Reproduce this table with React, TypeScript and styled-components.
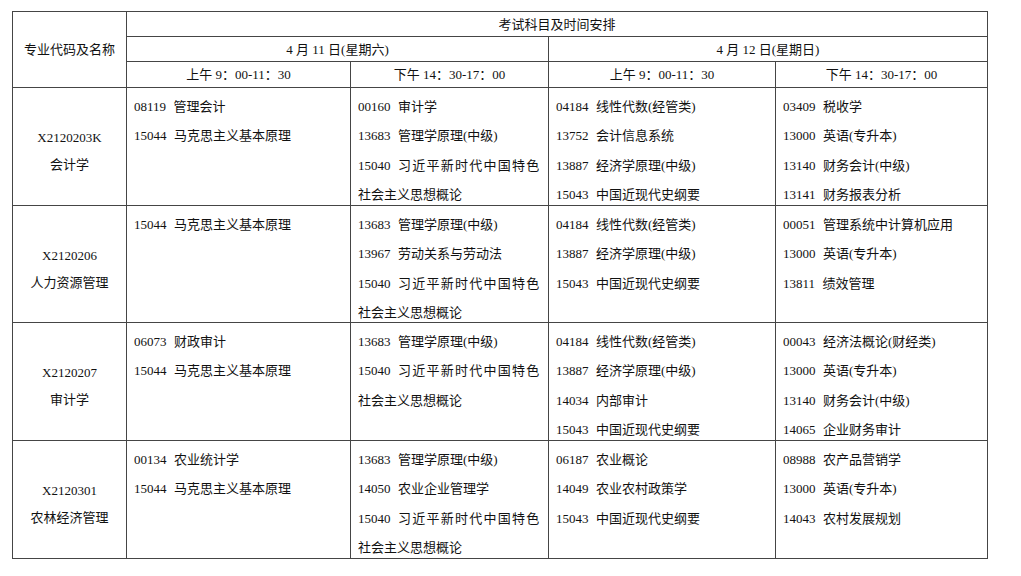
import React from "react";
import styled, { createGlobalStyle } from "styled-components";

const GlobalStyle = createGlobalStyle`
  html, body { margin: 0; padding: 0; background: #ffffff; }
  body {
    font-family: "Liberation Serif", "Noto Sans CJK SC", serif;
    color: #111111;
  }
`;

const Page = styled.div`
  padding: 11px 0 0 12px;
  width: 1021px;
  height: 576px;
  box-sizing: border-box;
`;

const Grid = styled.div`
  display: grid;
  width: max-content;
  grid-template-columns: 113px 223px 197px 226px 211px;
  grid-template-rows: 24px 24px 25px 117px 116px 117px 117px;
  gap: 1px;
  padding: 1px;
  background: #454545;
`;

const Cell = styled.div<{ $col?: string; $row?: string }>`
  background: #ffffff;
  grid-column: ${(p) => p.$col ?? "auto"};
  grid-row: ${(p) => p.$row ?? "auto"};
  font-size: 13px;
  overflow: visible;
  min-width: 0;
`;

const HeadCell = styled(Cell)`
  display: flex;
  align-items: center;
  justify-content: center;
  white-space: pre;
  line-height: 1;
`;

const MajorCell = styled(Cell)`
  display: flex;
  flex-direction: column;
  align-items: center;
  justify-content: center;
  padding-top: 9px;
  box-sizing: border-box;
  line-height: 27px;
`;

const ListCell = styled(Cell)`
  padding: 4px 8px 0 7px;
  box-sizing: border-box;
  position: relative;
  z-index: 1;
`;

const Line = styled.div`
  height: 29.3px;
  line-height: 29.3px;
  white-space: nowrap;
`;

const Code = styled.span`
  margin-right: 7.5px;
`;

const Name = styled.span<{ $spread?: boolean }>`
  letter-spacing: ${(p) => (p.$spread ? "1.25px" : "0")};
`;

type Course = { code?: string; name: string; spread?: boolean };

const split = (s: string): Course[] =>
  s.split("|").map((it) => {
    if (it.startsWith("~")) return { name: it.slice(1) };
    const [code, ...rest] = it.split(" ");
    const name = rest.join(" ");
    return { code, name, spread: name === "习近平新时代中国特色" };
  });

const rows: { code: string; major: string; cols: string[] }[] = [
  {
    code: "X2120203K",
    major: "会计学",
    cols: [
      "08119 管理会计|15044 马克思主义基本原理",
      "00160 审计学|13683 管理学原理(中级)|15040 习近平新时代中国特色|~社会主义思想概论",
      "04184 线性代数(经管类)|13752 会计信息系统|13887 经济学原理(中级)|15043 中国近现代史纲要",
      "03409 税收学|13000 英语(专升本)|13140 财务会计(中级)|13141 财务报表分析",
    ],
  },
  {
    code: "X2120206",
    major: "人力资源管理",
    cols: [
      "15044 马克思主义基本原理",
      "13683 管理学原理(中级)|13967 劳动关系与劳动法|15040 习近平新时代中国特色|~社会主义思想概论",
      "04184 线性代数(经管类)|13887 经济学原理(中级)|15043 中国近现代史纲要",
      "00051 管理系统中计算机应用|13000 英语(专升本)|13811 绩效管理",
    ],
  },
  {
    code: "X2120207",
    major: "审计学",
    cols: [
      "06073 财政审计|15044 马克思主义基本原理",
      "13683 管理学原理(中级)|15040 习近平新时代中国特色|~社会主义思想概论",
      "04184 线性代数(经管类)|13887 经济学原理(中级)|14034 内部审计|15043 中国近现代史纲要",
      "00043 经济法概论(财经类)|13000 英语(专升本)|13140 财务会计(中级)|14065 企业财务审计",
    ],
  },
  {
    code: "X2120301",
    major: "农林经济管理",
    cols: [
      "00134 农业统计学|15044 马克思主义基本原理",
      "13683 管理学原理(中级)|14050 农业企业管理学|15040 习近平新时代中国特色|~社会主义思想概论",
      "06187 农业概论|14049 农业农村政策学|15043 中国近现代史纲要",
      "08988 农产品营销学|13000 英语(专升本)|14043 农村发展规划",
    ],
  },
];

const times = [
  "上午 9：00-11：30",
  "下午 14：30-17：00",
  "上午 9：00-11：30",
  "下午 14：30-17：00",
];

export default function App() {
  return (
    <>
      <GlobalStyle />
      <Page>
        <Grid>
          <HeadCell $col="1" $row="1 / 4">专业代码及名称</HeadCell>
          <HeadCell $col="2 / 6" $row="1">考试科目及时间安排</HeadCell>
          <HeadCell $col="2 / 4" $row="2">4 月 11 日(星期六)</HeadCell>
          <HeadCell $col="4 / 6" $row="2">4 月 12 日(星期日)</HeadCell>
          {times.map((t, i) => (
            <HeadCell key={i} $col={`${i + 2}`} $row="3">
              {t}
            </HeadCell>
          ))}
          {rows.map((r, ri) => (
            <React.Fragment key={r.code}>
              <MajorCell $col="1" $row={`${ri + 4}`}>
                <div>{r.code}</div>
                <div>{r.major}</div>
              </MajorCell>
              {r.cols.map((c, ci) => (
                <ListCell key={ci} $col={`${ci + 2}`} $row={`${ri + 4}`}>
                  {split(c).map((course, k) => (
                    <Line key={k}>
                      {course.code && <Code>{course.code}</Code>}
                      <Name $spread={course.spread}>{course.name}</Name>
                    </Line>
                  ))}
                </ListCell>
              ))}
            </React.Fragment>
          ))}
        </Grid>
      </Page>
    </>
  );
}
